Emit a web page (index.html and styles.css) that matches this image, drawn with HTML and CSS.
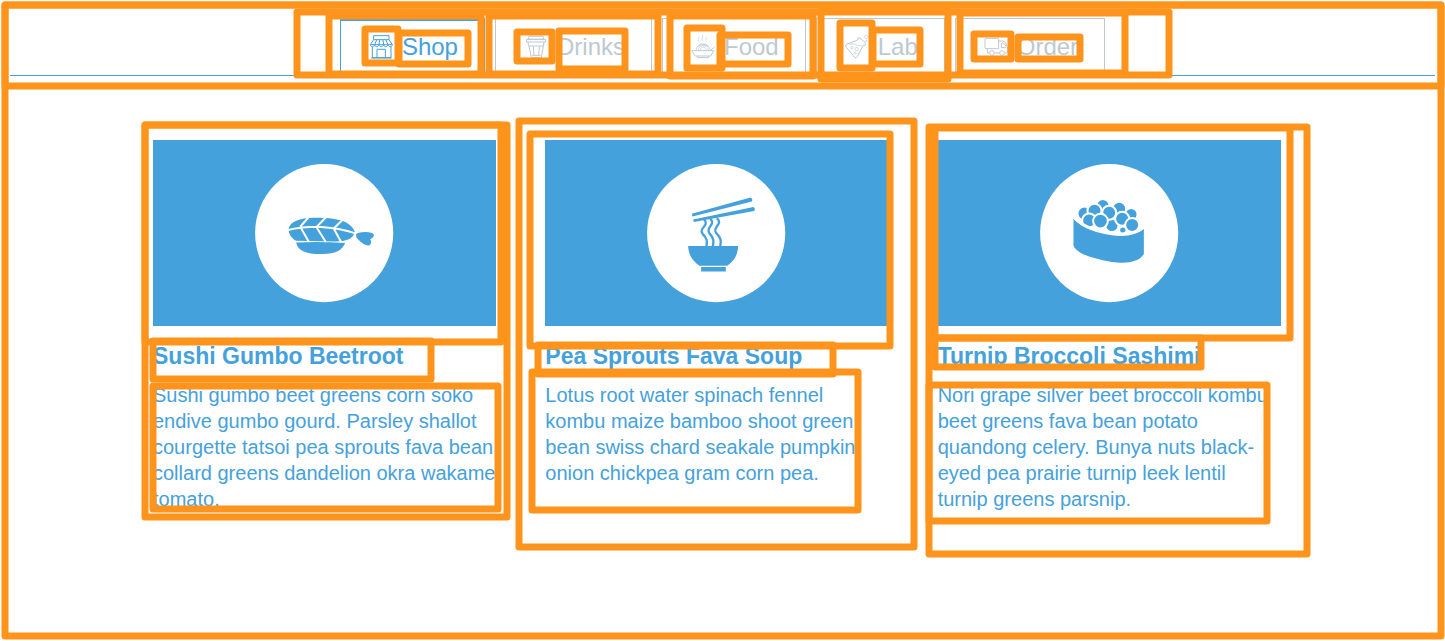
FILE: index.html
```html
<!DOCTYPE html>
<html lang="en">
<head>
<meta charset="utf-8">
<meta name="viewport" content="width=device-width, initial-scale=1">
<title>Shop</title>
<link rel="stylesheet" href="styles.css">
</head>
<body>
<header class="header">
  <nav class="tabs" aria-label="Sections">
    <a class="tab tab-active" href="#shop" aria-current="page">
      <svg class="tab-icon" viewBox="0 0 72 72" aria-hidden="true">
        <path d="M14 2h46v12H14zM14 14L4 29h66L60 14M4 29c0 8 11 8 13 0c1 8 11 8 13 0c1 8 12 8 14 0c1 8 11 8 13 0c1 8 13 8 13 0M23 15l-6 14M32 15l-2 14M42 15l2 14M51 15l6 14M10 36v32h56V36M24 68V43h25v25M6 69h62"/>
      </svg>
      <span>Shop</span>
    </a>
    <a class="tab" href="#drinks">
      <svg class="tab-icon" viewBox="0 0 72 72" aria-hidden="true">
        <path d="M15 4h42l3 9H12zM8 13h56v8H8zM12 21l2 12h44l2-12M15 33l7 35h30l6-35M28 34l2 27M46 34l-2 27M24 61h26"/>
      </svg>
      <span>Drinks</span>
    </a>
    <a class="tab" href="#food">
      <svg class="tab-icon" viewBox="0 0 72 72" aria-hidden="true">
        <path d="M2 47h66l-9 16H13zM18 63l2 5h32l2-5M58 46l12-9"/>
        <path class="fine" d="M15 45c2-22 40-22 43 0M21 45c3-17 28-17 31 0M27 45c3-11 16-11 19 0M18 36c10-8 26-8 37 0M22 31c10-6 20-6 28 0M24 20c-7-6 3-8-1-14M35 18c-6-7 3-9-1-17M46 20c-6-6 3-8-1-14"/>
      </svg>
      <span>Food</span>
    </a>
    <a class="tab" href="#lab">
      <svg class="tab-icon" viewBox="0 0 72 72" aria-hidden="true">
        <path d="M38 15L4 28q-5 4 0 9l25 30q5 4 8-2l16-31M38 15q0-10 7-6l16 14q4 8-8 11"/>
        <path class="fine" d="M10 27h15q12 5 28 6"/>
        <g class="fine">
          <circle cx="21" cy="38" r="4"/><circle cx="35" cy="42" r="5"/><circle cx="31" cy="55" r="3"/><circle cx="64" cy="6" r="5"/><circle cx="64" cy="18" r="2"/>
        </g>
      </svg>
      <span>Lab</span>
    </a>
    <a class="tab" href="#order">
      <svg class="tab-icon" viewBox="0 0 72 72" aria-hidden="true">
        <path d="M6 10h35q3 0 3 3v28H6q-3 0-3-3V13q0-3 3-3M44 18h12q10 0 14 17v19h-9M10 41v13h7M31 54h16M52 24v14h15M52 24h5q6 2 9 11"/>
        <circle cx="24" cy="54" r="7"/><circle cx="54" cy="54" r="7"/>
      </svg>
      <span>Order</span>
    </a>
  </nav>
</header>

<main class="cards">
  <article class="card">
    <svg class="card-image" viewBox="0 0 343 186" role="img" aria-label="Prawn sushi">
      <circle class="plate" cx="171" cy="93" r="69"/>
      <g class="glyph" transform="translate(87 10) scale(.3333)">
        <path d="M145 238C148 215 180 203 220 203C275 202 332 208 344 246C338 270 312 275 280 274L168 272C152 263 146 250 145 238z"/>
        <path d="M168 277Q240 273 315 279C306 302 284 313 242 312C196 311 173 302 168 277z"/>
        <path d="M347 254Q351 246 376 246Q397 246 401 254Q402 262 390 267Q396 278 389 285Q376 290 354 268Q346 260 347 254z"/>
        <path class="cut" d="M143 240Q183 230 235 230Q300 234 346 250M207 200l-27 30M259 200l-31 32M310 207l-31 30M182 233l24 42M230 233l27 43M281 236l22 40"/>
      </g>
    </svg>
    <h2 class="card-title">Sushi Gumbo Beetroot</h2>
    <p class="card-text">Sushi gumbo beet greens corn soko endive gumbo gourd. Parsley shallot courgette tatsoi pea sprouts fava bean collard greens dandelion okra wakame tomato.</p>
  </article>

  <article class="card">
    <svg class="card-image" viewBox="0 0 343 186" role="img" aria-label="Noodle soup">
      <circle class="plate" cx="171" cy="93" r="69"/>
      <g class="glyph" transform="translate(85 10) scale(.3333)">
        <path d="M174 288H324C323 317 309 335 291 347H208C190 335 175 317 174 288zM213 351H287V364H213z"/>
        <path d="M185 191L361 142Q369 146 365 154L187 199zM189 208L370 171Q377 176 372 183L191 216z"/>
        <path class="noodle" d="M222 208C240 228 202 234 218 252C234 268 230 276 229 289M241 206C258 225 224 232 238 250C254 267 250 277 248 289M260 204C282 223 243 231 259 250C276 266 272 277 270 289"/>
      </g>
    </svg>
    <h2 class="card-title">Pea Sprouts Fava Soup</h2>
    <p class="card-text">Lotus root water spinach fennel kombu maize bamboo shoot green bean swiss chard seakale pumpkin onion chickpea gram corn pea.</p>
  </article>

  <article class="card">
    <svg class="card-image" viewBox="0 0 343 186" role="img" aria-label="Roe sushi">
      <circle class="plate" cx="171" cy="93" r="69"/>
      <g class="glyph roe" transform="translate(82 10) scale(.3333)">
        <circle cx="248" cy="167" r="20"/><circle cx="297" cy="176" r="21"/><circle cx="333" cy="193" r="19"/>
        <circle cx="193" cy="190" r="21"/><circle cx="223" cy="182" r="21"/><circle cx="308" cy="240" r="11"/>
        <circle cx="275" cy="226" r="20"/><circle cx="207" cy="211" r="21"/><circle cx="267" cy="188" r="21"/>
        <circle cx="306" cy="206" r="21"/><circle cx="241" cy="213" r="22"/><circle cx="336" cy="225" r="21"/>
        <path d="M160 205C180 230 225 252 302 258Q350 256 371 236V312C360 331 332 339 304 338C265 336 235 327 207 319C180 310 164 298 160 286z"/>
        <path class="rim" d="M158 199C180 224 225 246 302 252Q350 250 373 231"/>
      </g>
    </svg>
    <h2 class="card-title">Turnip Broccoli Sashimi</h2>
    <p class="card-text">Nori grape silver beet broccoli kombu beet greens fava bean potato quandong celery. Bunya nuts black-eyed pea prairie turnip leek lentil turnip greens parsnip.</p>
  </article>
</main>

<!-- Outlines that mark each nested block of the page -->
<svg class="outlines" viewBox="0 0 1445 641" aria-hidden="true">
  <rect x="5" y="5" width="1436" height="631"/>
  <rect x="5" y="5" width="1436" height="81"/>
  <rect x="297" y="12" width="872" height="63"/>
  <rect x="329" y="16" width="152" height="58"/>
  <rect x="489" y="16" width="169" height="58"/>
  <rect x="670" y="16" width="143" height="60"/>
  <rect x="821" y="11" width="127" height="68"/>
  <rect x="960" y="13" width="165" height="60"/>
  <rect x="365" y="29" width="33" height="34"/>
  <rect x="399" y="33" width="69" height="31"/>
  <rect x="517" y="32" width="35" height="29"/>
  <rect x="559" y="31" width="66" height="38"/>
  <rect x="687" y="28" width="35" height="40"/>
  <rect x="720" y="35" width="68" height="29"/>
  <rect x="840" y="23" width="32" height="45"/>
  <rect x="873" y="30" width="47" height="34"/>
  <rect x="974" y="34" width="37" height="25"/>
  <rect x="1018" y="37" width="62" height="22"/>
  <rect x="145" y="125" width="362" height="392"/>
  <rect x="145" y="125" width="356" height="217"/>
  <rect x="153" y="341" width="278" height="38"/>
  <rect x="153" y="386" width="345" height="123"/>
  <rect x="519" y="121" width="395" height="426"/>
  <rect x="530" y="134" width="360" height="212"/>
  <rect x="538" y="345" width="295" height="29"/>
  <rect x="532" y="372" width="326" height="138"/>
  <rect x="929" y="127" width="378" height="427"/>
  <rect x="935" y="128" width="355" height="210"/>
  <rect x="935" y="338" width="266" height="29"/>
  <rect x="929" y="385" width="338" height="136"/>
</svg>
</body>
</html>
```

FILE: styles.css
```css
:root {
  --blue: #45a1dc;
  --grey: #bdc9d0;
  --orange: #ff941c;
}

* {
  box-sizing: border-box;
}

body {
  margin: 0;
  min-height: 100vh;
  position: relative;
  background: #fff;
  color: var(--blue);
  font: 20px/26px "Liberation Sans", Arial, Helvetica, sans-serif;
}

.header {
  margin: 0 10px;
  padding-top: 18px;
  border-bottom: 1px solid var(--blue);
}

.tabs {
  display: flex;
  justify-content: center;
  gap: 10px;
}

.tab {
  display: flex;
  align-items: center;
  gap: 9px;
  height: 57px;
  padding: 0 26px 0 28px;
  border: 1px solid var(--grey);
  border-bottom: 0;
  color: var(--grey);
  font-size: 24px;
  text-decoration: none;
}

.tab-active {
  padding-bottom: 2px;
  border-color: var(--blue);
  border-top-width: 3px;
  color: var(--blue);
}

.tab-icon {
  flex: none;
  width: 24px;
  height: 24px;
  fill: none;
  stroke: currentColor;
  stroke-width: 3;
  stroke-linejoin: round;
}

.fine {
  stroke-width: 2;
}

.cards {
  display: grid;
  grid-template-columns: repeat(3, 1fr);
  gap: 49px;
  max-width: 1139px;
  margin: 0 auto;
  padding: 64px 11px 64px 0;
}

.card-image {
  display: block;
  width: 100%;
  background: var(--blue);
}

.plate {
  fill: #fff;
}

.glyph {
  fill: var(--blue);
}

.cut {
  fill: none;
  stroke: #fff;
  stroke-width: 6;
}

.noodle {
  fill: none;
  stroke: var(--blue);
  stroke-width: 7;
}

.roe circle {
  stroke: #fff;
  stroke-width: 6;
}

.rim {
  fill: none;
  stroke: #fff;
  stroke-width: 8;
}

.card-title {
  margin: 16px 0 12px;
  font-size: 23px;
  line-height: 28px;
}

.card-text {
  margin: 0;
}

.outlines {
  position: absolute;
  top: 0;
  left: 0;
  width: 100%;
  fill: none;
  stroke: var(--orange);
  stroke-width: 7;
  stroke-linejoin: round;
  pointer-events: none;
}
```
